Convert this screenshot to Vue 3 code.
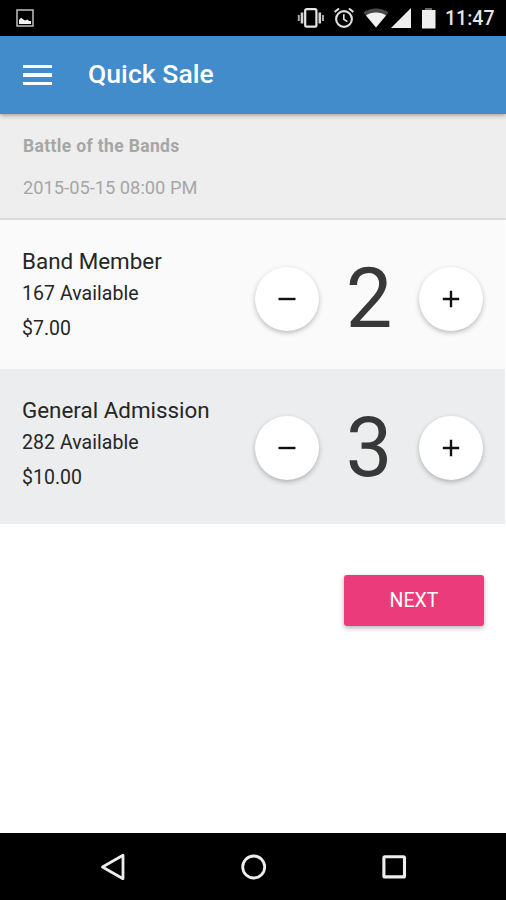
<template>
  <div class="screen">
    <!-- Android status bar -->
    <div class="status-bar">
      <svg class="notice-icon" width="18" height="18" viewBox="0 0 18 18">
        <rect x="1" y="1" width="16" height="16" fill="none" stroke="#b4b4b4" stroke-width="1.6" />
        <path d="M3 15V11L5 8.8L7.5 10.5L9 11.5L11.5 10.5L13 12L15 12V15Z" fill="#f2f2f2" />
      </svg>
      <div class="status-icons">
        <svg class="vibrate" width="28" height="20" viewBox="0 0 28 20">
          <rect x="8.2" y="1.2" width="11.2" height="17.4" rx="1.4" fill="none" stroke="#e6e6e6" stroke-width="2.2" />
          <path d="M5 4.5V15.5M22.8 4.5V15.5" stroke="#d4d4d4" stroke-width="2.6" />
          <path d="M1.8 7V13M26 7V13" stroke="#a8a8a8" stroke-width="2" />
        </svg>
        <svg class="alarm" width="22" height="22" viewBox="0 0 22 22">
          <circle cx="11" cy="12" r="7.9" fill="none" stroke="#e0e0e0" stroke-width="2.1" />
          <path d="M1.6 5L6 1.4M20.4 5L16 1.4" stroke="#e0e0e0" stroke-width="2" />
          <path d="M10.8 7.2V12.3L14.4 14.6" fill="none" stroke="#e0e0e0" stroke-width="1.7" />
        </svg>
        <svg class="wifi" width="26" height="20" viewBox="0 0 26 20">
          <path d="M0.5 4.5C7.5 -1 18.5 -1 25.5 4.5L13 19.5Z" fill="#4a4a4a" />
          <path d="M3 7.6C8 3.6 18 3.6 23 7.6L13 19.5Z" fill="#f2f2f2" />
        </svg>
        <svg class="signal" width="20" height="20" viewBox="0 0 20 20">
          <path d="M0 20L20 0V20Z" fill="#eeeeee" />
        </svg>
        <svg class="battery" width="15" height="21" viewBox="0 0 15 21">
          <path d="M4 0H11V2H4Z" fill="#666666" />
          <path d="M1 2H14.5V20.5H1Z" fill="#eeeeee" />
        </svg>
        <span class="clock">11:47</span>
      </div>
    </div>

    <header class="toolbar">
      <button class="menu-btn" aria-label="Menu">
        <span></span>
        <span></span>
        <span></span>
      </button>
      <h1 class="toolbar-title">Quick Sale</h1>
    </header>

    <section class="event">
      <div class="event-name">{{ event.name }}</div>
      <div class="event-date">{{ event.date }}</div>
    </section>

    <ul class="tickets">
      <li v-for="ticket in tickets" :key="ticket.id" class="ticket">
        <div class="ticket-info">
          <div class="ticket-name">{{ ticket.name }}</div>
          <div class="ticket-available">{{ ticket.available }} Available</div>
          <div class="ticket-price">${{ ticket.price.toFixed(2) }}</div>
        </div>
        <div class="counter">
          <button class="round-btn" aria-label="Remove" @click="remove(ticket)">
            <svg width="18" height="18" viewBox="0 0 18 18">
              <path d="M0.5 9H17.5" stroke="#111111" stroke-width="2.4" />
            </svg>
          </button>
          <span class="quantity">{{ ticket.quantity }}</span>
          <button class="round-btn" aria-label="Add" @click="add(ticket)">
            <svg width="18" height="18" viewBox="0 0 18 18">
              <path d="M0.8 9H17.2M9 0.8V17.2" stroke="#111111" stroke-width="2.4" />
            </svg>
          </button>
        </div>
      </li>
    </ul>

    <div class="actions">
      <button class="next-btn">NEXT</button>
    </div>

    <!-- Android navigation bar -->
    <nav class="nav-bar">
      <svg width="26" height="28" viewBox="0 0 26 28">
        <path d="M2.5 14L23 2.3V25.7Z" fill="none" stroke="#eeeeee" stroke-width="2.8" stroke-linejoin="round" />
      </svg>
      <svg width="26" height="28" viewBox="0 0 26 28">
        <circle cx="12.7" cy="14" r="11" fill="none" stroke="#eeeeee" stroke-width="2.8" />
      </svg>
      <svg width="26" height="28" viewBox="0 0 26 28">
        <rect x="2.9" y="3.7" width="20.6" height="20.2" rx="1" fill="none" stroke="#eeeeee" stroke-width="3.1" />
      </svg>
    </nav>
  </div>
</template>

<script setup>
import { ref } from 'vue'

const event = {
  name: 'Battle of the Bands',
  date: '2015-05-15 08:00 PM'
}

const tickets = ref([
  { id: 1, name: 'Band Member', available: 167, price: 7, quantity: 2 },
  { id: 2, name: 'General Admission', available: 282, price: 10, quantity: 3 }
])

function add(ticket) {
  if (ticket.quantity < ticket.available) ticket.quantity++
}

function remove(ticket) {
  if (ticket.quantity > 0) ticket.quantity--
}
</script>

<style>
body {
  margin: 0;
}
</style>

<style scoped>
.screen {
  display: flex;
  flex-direction: column;
  width: 506px;
  height: 900px;
  overflow: hidden;
  background: #ffffff;
  color: #262626;
  font-family: Roboto, "Liberation Sans", sans-serif;
}

button {
  padding: 0;
  border: none;
  font-family: inherit;
  cursor: pointer;
}

.status-bar {
  display: flex;
  flex: none;
  align-items: center;
  justify-content: space-between;
  box-sizing: border-box;
  height: 36px;
  padding: 0 11px 0 16px;
  background: #000000;
}

.status-icons {
  display: flex;
  align-items: center;
}

.alarm {
  margin-left: 8px;
}

.wifi {
  margin-left: 8px;
}

.signal {
  margin-left: 2px;
}

.battery {
  margin-left: 10px;
}

.clock {
  width: 50px;
  margin-left: 9px;
  padding-top: 2px;
  color: #e6e6e6;
  font-size: 19.5px;
  font-weight: 500;
  line-height: 24px;
  white-space: nowrap;
}

.toolbar {
  display: flex;
  flex: none;
  align-items: center;
  height: 78px;
  padding-left: 23px;
  background: #428ccb;
  box-shadow: 0 1px 5px rgba(0, 0, 0, 0.4);
  z-index: 1;
}

.menu-btn {
  display: flex;
  flex-direction: column;
  gap: 5px;
  width: 29px;
  background: none;
}

.menu-btn span {
  height: 3.5px;
  background: #ffffff;
}

.toolbar-title {
  margin: -2px 0 0 36px;
  color: #ffffff;
  font-size: 26.5px;
  font-weight: 500;
  line-height: 32px;
  letter-spacing: 0.05px;
}

.event {
  flex: none;
  box-sizing: border-box;
  height: 106px;
  padding: 21px 23px 0;
  border-bottom: 2px solid #dcdcdc;
  background: #eeeeee;
  color: #a6a6a6;
}

.event-name {
  font-size: 17.5px;
  font-weight: 700;
  line-height: 22px;
  letter-spacing: 0.35px;
}

.event-date {
  margin-top: 20px;
  font-size: 18.3px;
  line-height: 22px;
}

.tickets {
  flex: none;
  margin: 0 1px 0 0;
  padding: 0;
  list-style: none;
}

.ticket {
  display: flex;
  justify-content: space-between;
  box-sizing: border-box;
  height: 149px;
  padding: 26px 22px 0;
  background: #fafafa;
}

.ticket:nth-child(even) {
  height: 155px;
  background: #ebedee;
}

.ticket-name {
  font-size: 22.4px;
  line-height: 30px;
}

.ticket-available {
  margin-top: 5px;
  font-size: 19.5px;
  line-height: 26px;
  letter-spacing: 0.05px;
}

.ticket-price {
  margin-top: 9px;
  font-size: 19.5px;
  line-height: 26px;
}

.counter {
  display: flex;
  align-items: center;
  height: 106px;
}

.round-btn {
  display: flex;
  align-items: center;
  justify-content: center;
  width: 64px;
  height: 64px;
  border-radius: 50%;
  background: #ffffff;
  box-shadow: 0 2px 5px rgba(0, 0, 0, 0.26);
}

.quantity {
  width: 100px;
  color: #383838;
  font-size: 83px;
  line-height: 100px;
  text-align: center;
}

.actions {
  display: flex;
  flex: 1;
  align-items: flex-start;
  justify-content: flex-end;
  padding: 51px 22px 0 0;
}

.next-btn {
  width: 140px;
  height: 51px;
  padding-bottom: 1px;
  border-radius: 3px;
  background: #ec3b7a;
  box-shadow: 0 2px 5px rgba(0, 0, 0, 0.3);
  color: #ffffff;
  font-size: 19.5px;
}

.nav-bar {
  display: flex;
  flex: none;
  align-items: center;
  justify-content: space-between;
  box-sizing: border-box;
  height: 67px;
  padding: 0 99px 0 100px;
  background: #000000;
}
</style>
